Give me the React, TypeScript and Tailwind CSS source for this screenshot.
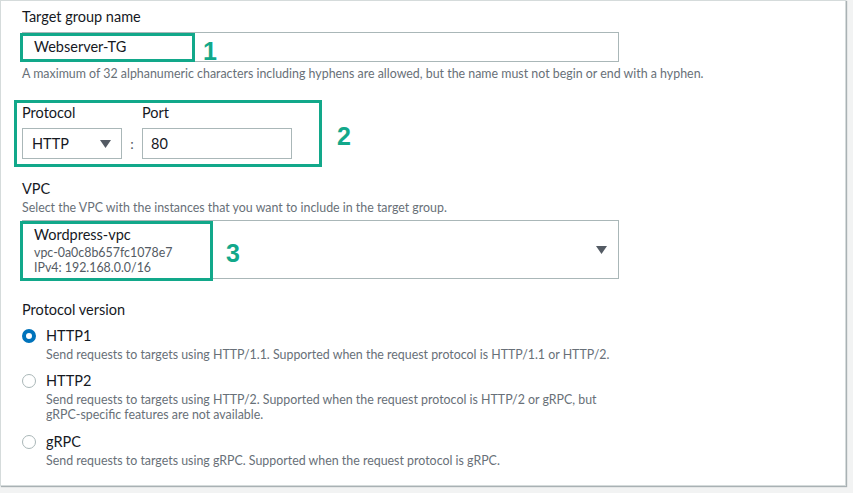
const font = { fontFamily: "Lato, 'Open Sans', sans-serif" };

const Caret = () => (
  <svg width="11" height="8" viewBox="0 0 11 8" className="shrink-0">
    <path d="M0 0 H11 L5.5 8 Z" fill="#545b64" />
  </svg>
);

const Radio = ({ checked }: { checked?: boolean }) =>
  checked ? (
    <span className="mt-[3px] box-border size-[14px] shrink-0 rounded-full border-[4.5px] border-[#0073bb] bg-white" />
  ) : (
    <span className="mt-[3px] box-border size-[14px] shrink-0 rounded-full border border-[#aab7b8] bg-white" />
  );

interface OptionProps {
  title: string;
  desc: string[];
  checked?: boolean;
  className?: string;
}

const Option = ({ title, desc, checked, className }: OptionProps) => (
  <div className={"flex gap-[10px] " + (className ?? "")}>
    <Radio checked={checked} />
    <div>
      <div className="text-[14.5px] leading-[20px] text-[#16191f]">{title}</div>
      <div className="mt-[1px] text-[12.4px] leading-[15px] text-[#687078]">
        {desc.map((d) => (
          <div key={d}>{d}</div>
        ))}
      </div>
    </div>
  </div>
);

const Mark = ({ n }: { n: string }) => (
  <span
    className="text-[25px] font-bold leading-none text-[#12a88a]"
    style={{ fontFamily: "'Liberation Sans', Arial, sans-serif" }}
  >
    {n}
  </span>
);

export default function App() {
  return (
    <div className="h-[493px] w-[853px] overflow-hidden bg-[#f2f3f3]" style={font}>
      <div className="h-[486px] w-[846px] border border-[#d5dbdb] bg-white pl-[21px] pt-[5px] shadow-[1px_1px_1px_rgba(0,28,36,0.3)]">
        {/* Target group name */}
        <div className="text-[14.5px] leading-[22px] text-[#16191f]">Target group name</div>
        <div className="relative mt-[4px] flex h-[30px] w-[597px] items-center border border-[#aab7b8] pl-[11px] text-[14.5px] text-[#16191f]">
          Webserver-TG
          <div className="absolute left-[-3px] top-[0px] h-[29px] w-[175px] border-[3px] border-[#12a88a]" />
          <div className="absolute left-[180px] top-[6px]">
            <Mark n="1" />
          </div>
        </div>
        <div className="mt-[4px] text-[12.4px] leading-[16px] text-[#687078]">
          A maximum of 32 alphanumeric characters including hyphens are allowed, but the name must not begin or end with a hyphen.
        </div>

        {/* Protocol / Port */}
        <div className="relative mt-[20px] flex items-end">
          <div className="absolute left-[-8px] top-[-2px] h-[67px] w-[308px] border-[3px] border-[#12a88a]" />
          <div className="absolute left-[315px] top-[22px]">
            <Mark n="2" />
          </div>
          <div>
            <div className="text-[14.5px] leading-[22px] text-[#16191f]">Protocol</div>
            <div className="mt-[4px] flex h-[31px] w-[100px] items-center justify-between border border-[#aab7b8] pl-[9px] pr-[10px] text-[14.5px] text-[#16191f]">
              HTTP
              <Caret />
            </div>
          </div>
          <div className="flex h-[31px] w-[20px] items-center justify-center text-[14px] text-[#545b64]">:</div>
          <div>
            <div className="text-[14.5px] leading-[22px] text-[#16191f]">Port</div>
            <div className="mt-[4px] flex h-[31px] w-[150px] items-center border border-[#aab7b8] pl-[8px] text-[14.5px] text-[#16191f]">
              80
            </div>
          </div>
        </div>

        {/* VPC */}
        <div className="mt-[19px] text-[14.5px] leading-[22px] text-[#16191f]">VPC</div>
        <div className="text-[12.4px] leading-[16px] text-[#687078]">
          Select the VPC with the instances that you want to include in the target group.
        </div>
        <div className="relative mt-[4px] flex h-[59px] w-[597px] items-center justify-between border border-[#aab7b8] pl-[11px] pr-[11px]">
          <div className="absolute left-[-3px] top-[0px] h-[60px] w-[193px] border-[3px] border-[#12a88a]" />
          <div className="absolute left-[203px] top-[20px]">
            <Mark n="3" />
          </div>
          <div>
            <div className="text-[14.5px] leading-[20px] text-[#16191f]">Wordpress-vpc</div>
            <div className="text-[12.4px] leading-[15px] text-[#545b64]">vpc-0a0c8b657fc1078e7</div>
            <div className="text-[12.4px] leading-[15px] text-[#545b64]">IPv4: 192.168.0.0/16</div>
          </div>
          <Caret />
        </div>

        {/* Protocol version */}
        <div className="mt-[20px] text-[14.5px] leading-[22px] text-[#16191f]">Protocol version</div>
        <Option
          className="mt-[5px]"
          checked
          title="HTTP1"
          desc={["Send requests to targets using HTTP/1.1. Supported when the request protocol is HTTP/1.1 or HTTP/2."]}
        />
        <Option
          className="mt-[9px]"
          title="HTTP2"
          desc={[
            "Send requests to targets using HTTP/2. Supported when the request protocol is HTTP/2 or gRPC, but",
            "gRPC-specific features are not available.",
          ]}
        />
        <Option
          className="mt-[10px]"
          title="gRPC"
          desc={["Send requests to targets using gRPC. Supported when the request protocol is gRPC."]}
        />
      </div>
    </div>
  );
}
